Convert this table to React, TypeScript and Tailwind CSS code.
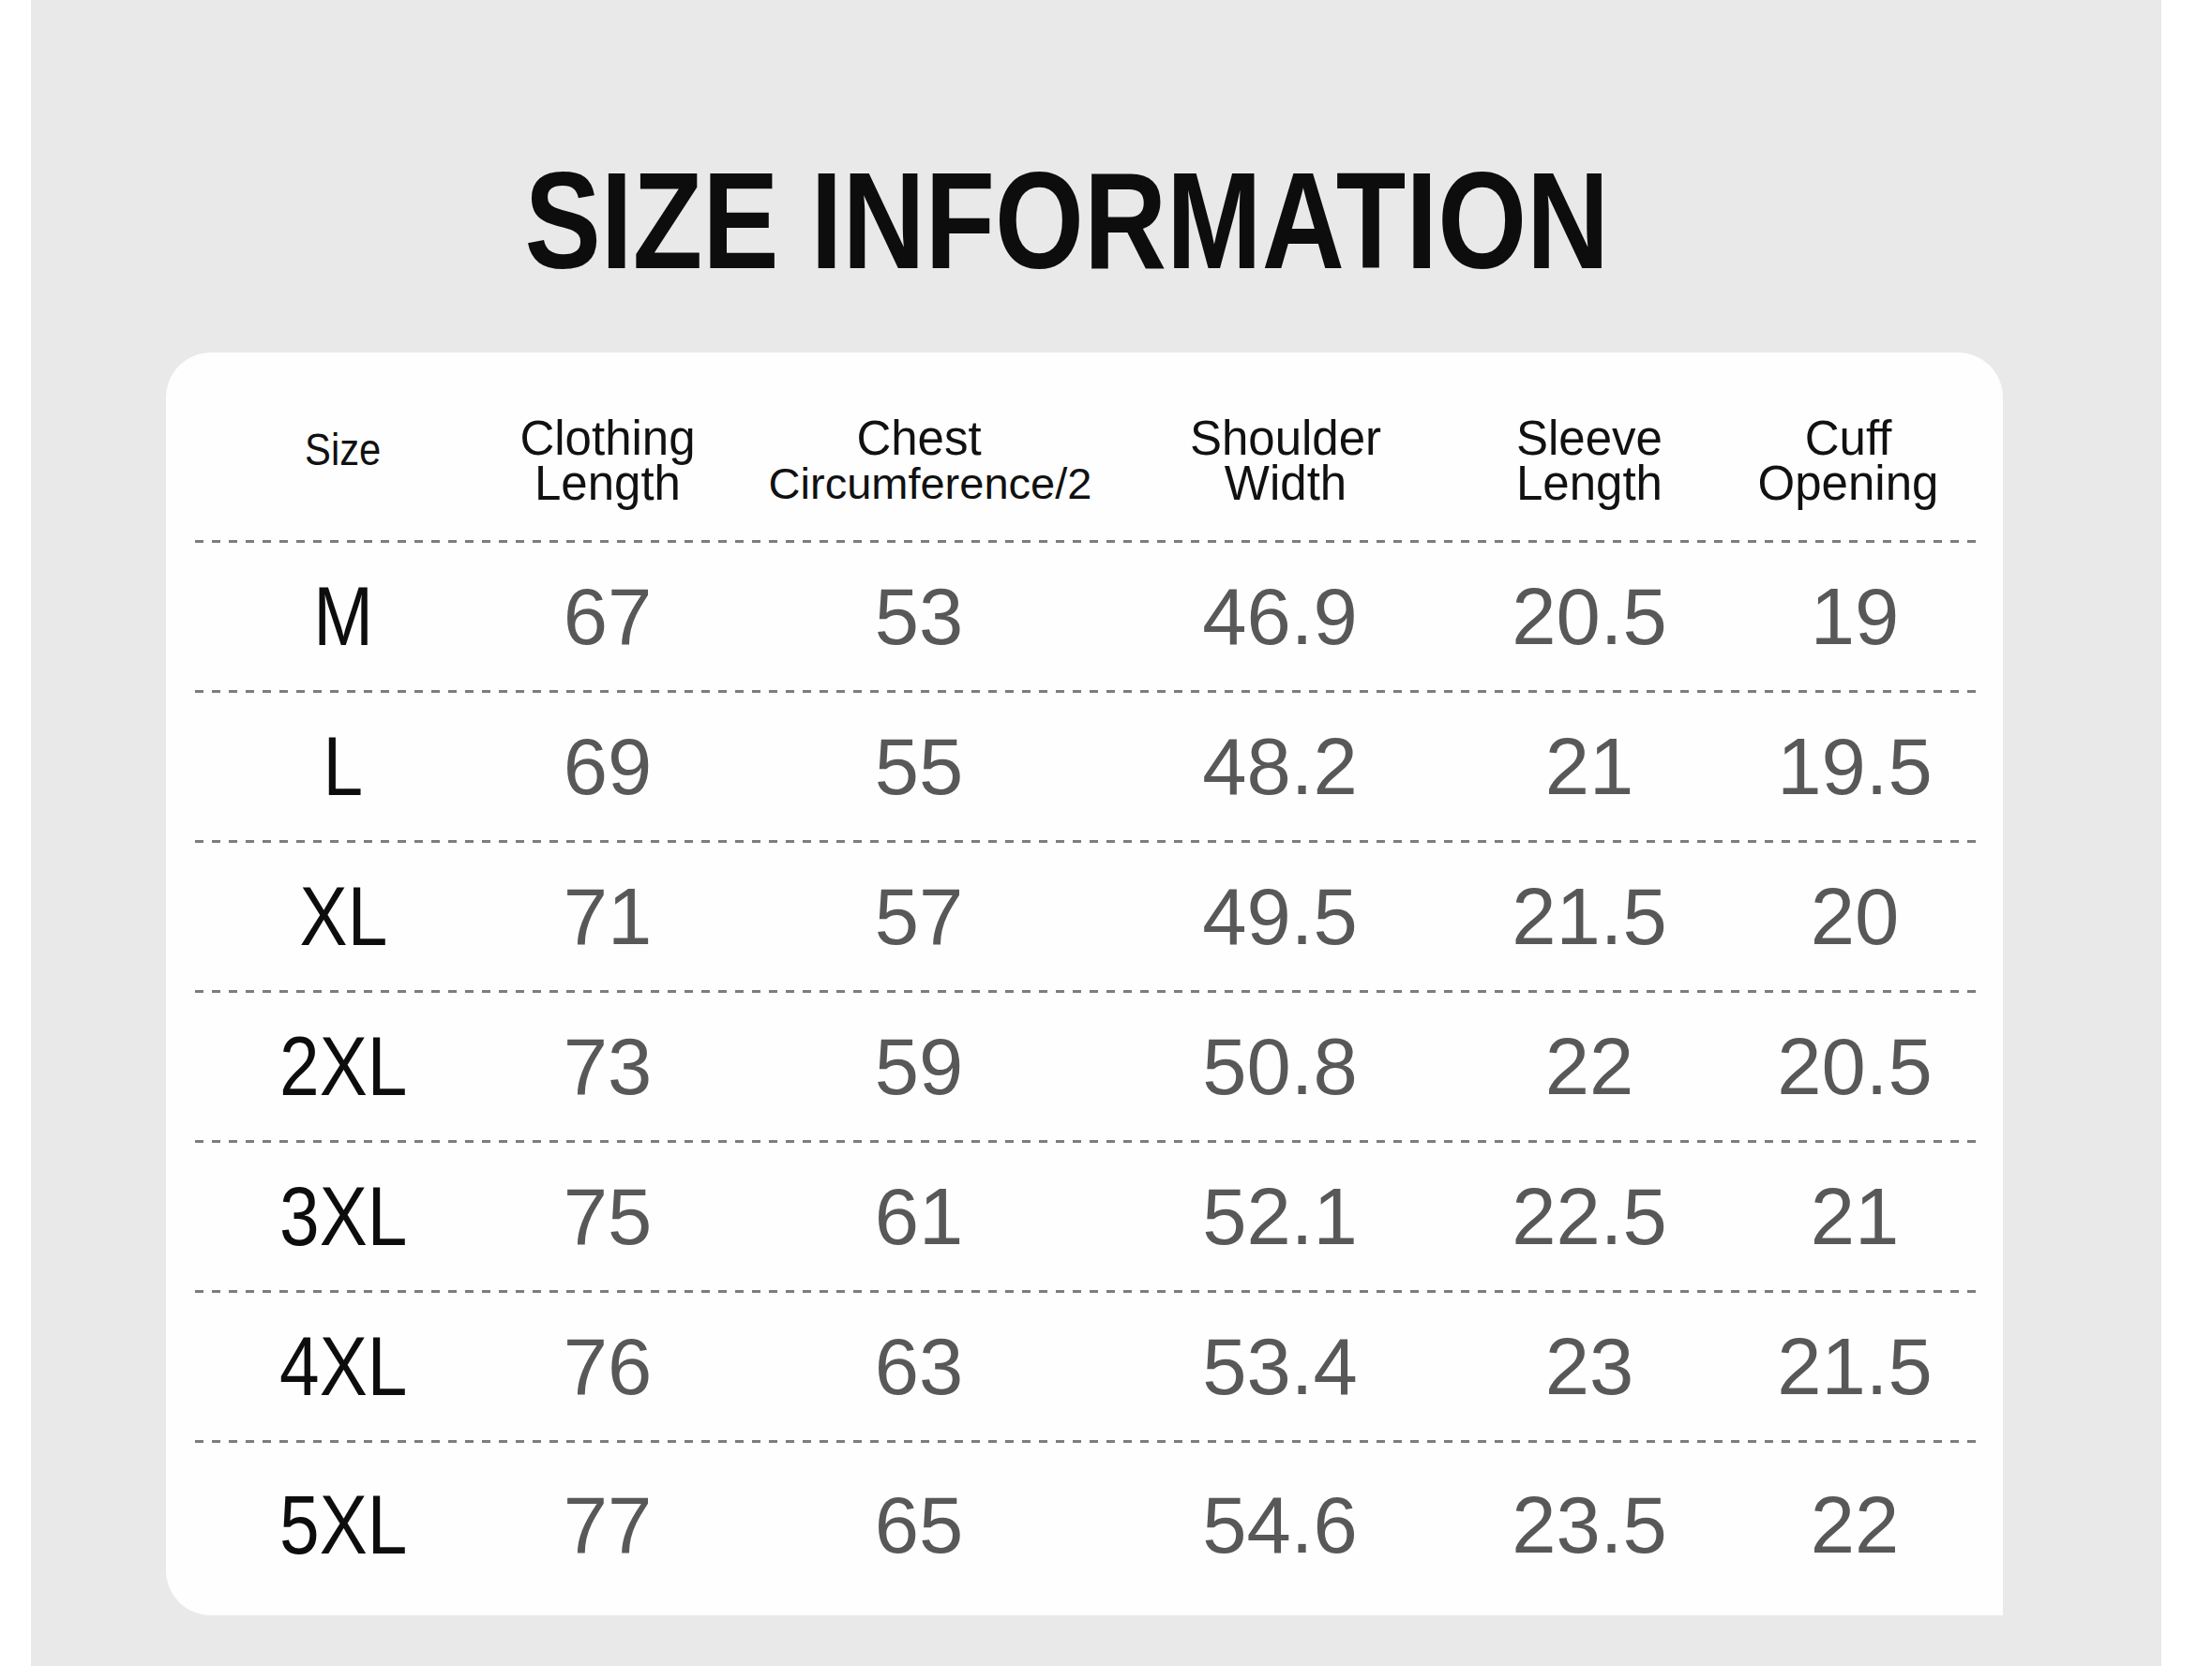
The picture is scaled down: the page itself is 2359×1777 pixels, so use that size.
import React from "react";

const rows: string[][] = [
  ["M", "67", "53", "46.9", "20.5", "19"],
  ["L", "69", "55", "48.2", "21", "19.5"],
  ["XL", "71", "57", "49.5", "21.5", "20"],
  ["2XL", "73", "59", "50.8", "22", "20.5"],
  ["3XL", "75", "61", "52.1", "22.5", "21"],
  ["4XL", "76", "63", "53.4", "23", "21.5"],
  ["5XL", "77", "65", "54.6", "23.5", "22"],
];

const grid = "grid grid-cols-[282px_282px_382px_388px_272px_294px] pl-[48px]";

function Dash() {
  return (
    <div className="ml-[31px] mr-[25px] h-[3px] bg-[repeating-linear-gradient(90deg,#7d7d7d_0px,#7d7d7d_9px,transparent_9px,transparent_18px)]" />
  );
}

function Head({ a, b, bClass, cls }: { a: string; b: string; bClass?: string; cls?: string }) {
  return (
    <div className={`flex flex-col items-center text-[51px] leading-[48px] text-[#111] whitespace-nowrap ${cls ?? ""}`}>
      <span>{a}</span>
      <span className={bClass ?? ""}>{b}</span>
    </div>
  );
}

export default function App() {
  return (
    <div className="w-[2359px] h-[1777px] bg-white font-['Liberation_Sans',Arial,sans-serif]">
      <div className="ml-[33px] w-[2272px] h-[1777px] bg-[#e9e9e9] flex flex-col pt-[162px]">
        <div className="flex justify-center pr-[62px]">
          <h1 className="inline-block scale-x-[0.83] font-bold text-[147px] leading-[147px] text-[#0d0d0d] whitespace-nowrap">
            SIZE INFORMATION
          </h1>
        </div>
        <div className="mt-[67px] ml-[144px] w-[1959px] bg-[#fefefe] rounded-tl-[48px] rounded-tr-[48px] rounded-bl-[48px] rounded-br-none pb-[9px]">
          <div className={`${grid} h-[200px] pt-[68px]`}>
            <div className="flex justify-center">
              <span className="inline-block scale-x-[0.87] mt-[12px] text-[48px] leading-[48px] text-[#111]">
                Size
              </span>
            </div>
            <Head a="Clothing" b="Length" />
            <Head a="Chest" b="Circumference/2" bClass="text-[47px] ml-[24px]" />
            <Head a="Shoulder" b="Width" cls="pl-[12px]" />
            <Head a="Sleeve" b="Length" />
            <Head a="Cuff" b="Opening" cls="pr-[14px]" />
          </div>
          {rows.map((r, i) => (
            <div key={r[0]}>
              <Dash />
              <div className={`${grid} items-center ${i === rows.length - 1 ? "h-[175px]" : "h-[157px]"}`}>
                <div className="flex justify-center">
                  <span className="inline-block scale-x-[0.86] text-[89px] leading-[89px] text-[#0d0d0d]">
                    {r[0]}
                  </span>
                </div>
                {r.slice(1).map((v, j) => (
                  <div key={j} className="flex justify-center">
                    <span className="text-[85px] leading-[85px] text-[#585858]">{v}</span>
                  </div>
                ))}
              </div>
            </div>
          ))}
        </div>
      </div>
    </div>
  );
}
